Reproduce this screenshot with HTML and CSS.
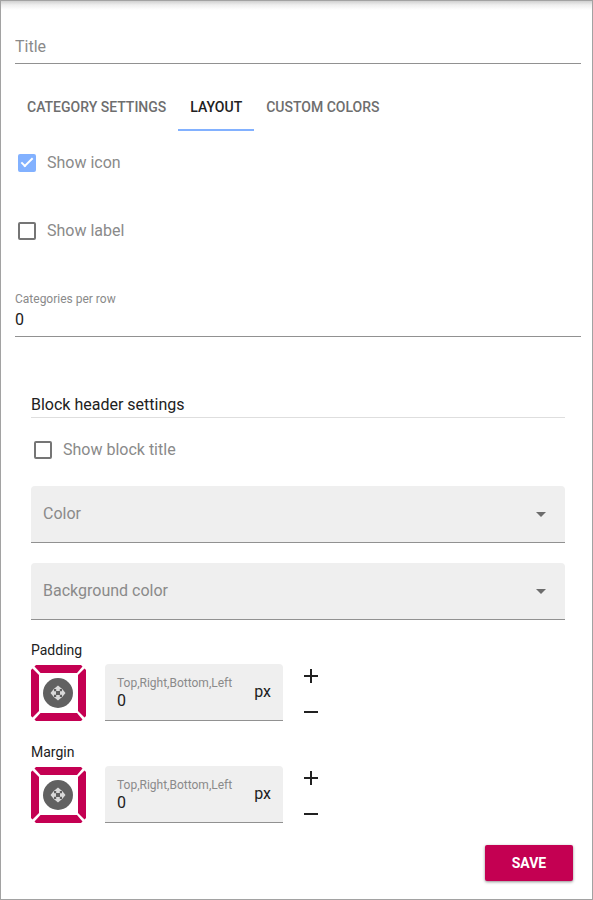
FILE: index.html
```html
<!DOCTYPE html>
<html lang="en">
<head>
<meta charset="utf-8">
<meta name="viewport" content="width=device-width, initial-scale=1">
<title>Category settings</title>
<link rel="stylesheet" href="styles.css">
</head>
<body>
<svg class="defs" aria-hidden="true">
  <symbol id="sides" viewBox="0 0 55 56">
    <g fill="#c40052">
      <path d="M5 0H50L51.5 1.5L46 8H9.5L3.5 1.5Z"/>
      <path d="M9.5 48H46L51.5 54.500L50 56H5L3.500 54.500Z"/>
      <path d="M0 5L1.500 3.500L8 10V46L1.500 52.500L0 51Z"/>
      <path d="M55 5L53.500 3.500L47 10V46L53.500 52.500L55 51Z"/>
    </g>
    <circle cx="27" cy="28" r="15" fill="#616161"/>
    <g transform="translate(27 28)" fill="#dadada">
      <path d="M0-7.5L4.2-4H1.8V-2H-1.8V-4H-4.2Z"/>
      <path d="M0 7.5L4.2 4H1.8V2H-1.8V4H-4.2Z"/>
      <path d="M-7.5 0L-4 4.2V1.8H-2V-1.8H-4V-4.2Z"/>
      <path d="M7.5 0L4 4.2V1.8H2V-1.8H4V-4.2Z"/>
    </g>
  </symbol>
</svg>
<form class="panel">
  <input class="line-input" type="text" placeholder="Title" aria-label="Title">

  <div class="tabs" role="tablist">
    <button class="tab" type="button" role="tab" aria-selected="false">Category settings</button>
    <button class="tab" type="button" role="tab" aria-selected="true">Layout</button>
    <button class="tab" type="button" role="tab" aria-selected="false">Custom colors</button>
  </div>

  <div class="checks">
    <label class="check"><input type="checkbox" checked>Show icon</label>
    <label class="check"><input type="checkbox">Show label</label>
  </div>

  <div class="row-count">
    <label for="per-row">Categories per row</label>
    <input class="line-input" id="per-row" type="text" value="0">
  </div>

  <section class="block">
    <h2 class="block-title">Block header settings</h2>
    <label class="check"><input type="checkbox">Show block title</label>
    <div class="selects">
      <div class="select">
        <select aria-label="Color"><option>Color</option></select>
      </div>
      <div class="select">
        <select aria-label="Background color"><option>Background color</option></select>
      </div>
    </div>

    <div class="spacing">
      <h3 class="spacing-title">Padding</h3>
      <div class="spacing-row">
        <button class="sides" type="button" aria-label="Padding sides"><svg><use href="#sides"/></svg></button>
        <div class="box">
          <div class="box-main">
            <label for="padding">Top,Right,Bottom,Left</label>
            <input id="padding" type="text" value="0">
          </div>
          <span class="unit">px</span>
        </div>
        <div class="steps">
          <button type="button" aria-label="Increase padding"><svg viewBox="0 0 24 24"><path d="M19 13h-6v6h-2v-6H5v-2h6V5h2v6h6v2z"/></svg></button>
          <button type="button" aria-label="Decrease padding"><svg viewBox="0 0 24 24"><path d="M19 13H5v-2h14v2z"/></svg></button>
        </div>
      </div>
    </div>

    <div class="spacing">
      <h3 class="spacing-title">Margin</h3>
      <div class="spacing-row">
        <button class="sides" type="button" aria-label="Margin sides"><svg><use href="#sides"/></svg></button>
        <div class="box">
          <div class="box-main">
            <label for="margin">Top,Right,Bottom,Left</label>
            <input id="margin" type="text" value="0">
          </div>
          <span class="unit">px</span>
        </div>
        <div class="steps">
          <button type="button" aria-label="Increase margin"><svg viewBox="0 0 24 24"><path d="M19 13h-6v6h-2v-6H5v-2h6V5h2v6h6v2z"/></svg></button>
          <button type="button" aria-label="Decrease margin"><svg viewBox="0 0 24 24"><path d="M19 13H5v-2h14v2z"/></svg></button>
        </div>
      </div>
    </div>
  </section>

  <div class="actions">
    <button class="save" type="submit">Save</button>
  </div>
</form>
</body>
</html>
```
FILE: styles.css
```css
*, *::before, *::after { box-sizing: border-box; }

body {
  margin: 0;
  background: #fff;
  color: #212121;
  font: 400 16px/20px Roboto, "Liberation Sans", sans-serif;
}

button, input, select { font: inherit; color: inherit; margin: 0; }
button { padding: 0; border: 0; background: none; cursor: pointer; }

.defs { display: none; }

.panel {
  display: flex;
  flex-direction: column;
  min-height: 100vh;
  padding: 28px 11px 18px 14px;
  border: 1px solid #a2a2a2;
  background: linear-gradient(#d0d0d0, #efefef 4px, #fff 9px);
}

.line-input {
  width: 100%;
  height: 35px;
  padding: 0;
  border: 0;
  border-bottom: 1px solid #919191;
  border-radius: 0;
  outline: 0;
  background: none;
}
.line-input::placeholder { color: #8a8a8a; opacity: 1; }

.tabs { display: flex; margin-top: 19px; }
.tab {
  height: 48px;
  padding: 2px 12px 0;
  border-bottom: 2px solid transparent;
  color: #6e6e6e;
  font-size: 14px;
  font-weight: 500;
  text-transform: uppercase;
}
.tab[aria-selected="true"] { color: #212121; border-color: #82b1ff; }

.checks {
  display: flex;
  flex-direction: column;
  gap: 44px;
  padding-top: 20px;
}
.check {
  display: flex;
  align-items: center;
  gap: 11px;
  height: 24px;
  padding-left: 3px;
  color: #8a8a8a;
}
.check input {
  appearance: none;
  width: 18px;
  height: 18px;
  border: 2px solid #757575;
  border-radius: 2px;
}
.check input:checked {
  border-color: #82b1ff;
  background: #82b1ff;
}
.check input:checked::before {
  content: "";
  display: block;
  width: 6px;
  height: 12px;
  margin: 0 auto;
  border: solid #fff;
  border-width: 0 2px 2px 0;
  transform: translateY(-1px) rotate(45deg);
}

.row-count { margin-top: 48px; }
.row-count label {
  display: block;
  color: #8a8a8a;
  font-size: 12px;
  line-height: 16px;
}
.row-count .line-input { height: 30px; padding-bottom: 5px; }

.block { padding: 58px 16px 0; }
.block-title {
  margin: 0 0 20px;
  padding-bottom: 2px;
  border-bottom: 1px solid #dedede;
  font-size: 16px;
  font-weight: 400;
}

.selects {
  display: grid;
  gap: 20px;
  margin: 24px 0 20px;
}
.select { position: relative; }
.select::after {
  content: "";
  position: absolute;
  top: 26px;
  right: 19px;
  border: solid transparent;
  border-width: 5px 5px 0;
  border-top-color: #6c6c6c;
  pointer-events: none;
}
.select select {
  display: block;
  appearance: none;
  width: 100%;
  height: 57px;
  padding: 0 40px 0 12px;
  border: 0;
  border-bottom: 1px solid #919191;
  border-radius: 4px 4px 0 0;
  outline: 0;
  background: #efefef;
  color: #8a8a8a;
}

.spacing { margin-bottom: 18px; }
.spacing-title {
  margin: 0 0 4px;
  font-size: 14px;
  font-weight: 400;
}
.spacing-row { display: flex; height: 60px; }
.sides { width: 55px; height: 56px; margin: 1px 19px 0 0; }
.sides svg { display: block; width: 55px; height: 56px; }
.box {
  display: flex;
  align-items: center;
  width: 178px;
  height: 57px;
  padding: 0 12px;
  border-bottom: 1px solid #919191;
  border-radius: 4px 4px 0 0;
  background: #efefef;
}
.box-main { flex: 1; min-width: 0; padding-top: 2px; }
.box-main label {
  display: block;
  color: #8a8a8a;
  font-size: 12px;
  line-height: 16px;
}
.box-main input {
  display: block;
  width: 100%;
  height: 20px;
  padding: 0;
  border: 0;
  outline: 0;
  background: none;
}
.steps {
  display: flex;
  flex-direction: column;
  gap: 12px;
  margin-left: 16px;
}
.steps button { width: 24px; height: 24px; }
.steps svg { display: block; fill: #212121; }

.actions {
  display: flex;
  justify-content: flex-end;
  margin-top: auto;
  padding-right: 8px;
}
.save {
  width: 88px;
  height: 36px;
  border-radius: 2px;
  background: #c40052;
  box-shadow: 0 1px 3px rgba(0, 0, 0, .45);
  color: #fff;
  font-size: 14px;
  font-weight: 700;
  text-transform: uppercase;
}
```
